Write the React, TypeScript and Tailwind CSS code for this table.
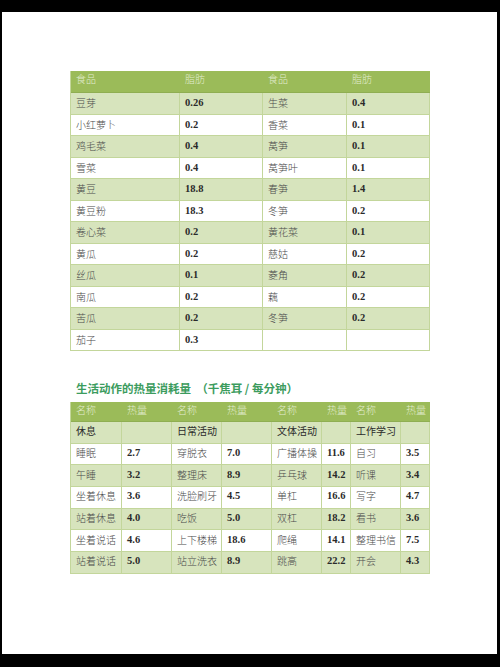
import React from 'react';

const cn = '"Noto Sans CJK SC", "Noto Sans", sans-serif';
const num = '"Liberation Serif", "DejaVu Serif", serif';

const foods: string[][] = [
    ['豆芽', '0.26', '生菜', '0.4'],
    ['小红萝卜', '0.2', '香菜', '0.1'],
    ['鸡毛菜', '0.4', '莴笋', '0.1'],
    ['雪菜', '0.4', '莴笋叶', '0.1'],
    ['黄豆', '18.8', '春笋', '1.4'],
    ['黄豆粉', '18.3', '冬笋', '0.2'],
    ['卷心菜', '0.2', '黄花菜', '0.1'],
    ['黄瓜', '0.2', '慈姑', '0.2'],
    ['丝瓜', '0.1', '菱角', '0.2'],
    ['南瓜', '0.2', '藕', '0.2'],
    ['苦瓜', '0.2', '冬笋', '0.2'],
    ['茄子', '0.3', '', ''],
];

const activities: string[][] = [
    ['休息', '', '日常活动', '', '文体活动', '', '工作学习', ''],
    ['睡眠', '2.7', '穿脱衣', '7.0', '广播体操', '11.6', '自习', '3.5'],
    ['午睡', '3.2', '整理床', '8.9', '乒乓球', '14.2', '听课', '3.4'],
    ['坐着休息', '3.6', '洗脸刷牙', '4.5', '单杠', '16.6', '写字', '4.7'],
    ['站着休息', '4.0', '吃饭', '5.0', '双杠', '18.2', '看书', '3.6'],
    ['坐着说话', '4.6', '上下楼梯', '18.6', '爬绳', '14.1', '整理书信', '7.5'],
    ['站着说话', '5.0', '站立洗衣', '8.9', '跳高', '22.2', '开会', '4.3'],
];

const isNum = (s: string) => /^[0-9.]+$/.test(s);

const Cell: React.FC<{text: string; center?: boolean; strong?: boolean}> = ({text, center, strong}) => (
    <div
        className={`border-r border-b border-[#c3d69b] pl-[5px] flex leading-[14px] ${center ? 'items-center pb-[2px]' : 'items-start pt-[3px]'} overflow-hidden whitespace-nowrap`}
    >
        {isNum(text) ? (
            <span className="text-[10.5px] font-bold text-[#2a2a2a] leading-[14px]" style={{fontFamily: num}}>{text}</span>
        ) : (
            <span
                className={`text-[10px] leading-[14px] ${strong ? 'text-[#2a2a2a]' : 'text-[#4a4a4a] font-light'}`}
                style={{fontFamily: cn}}
            >
                {text}
            </span>
        )}
    </div>
);

const Head: React.FC<{text: string; h: string}> = ({text, h}) => (
    <div className={`${h} bg-[#9bbb59] pl-[5px] flex items-start pt-[1px] border-b border-[#8fae52] leading-[14px] overflow-hidden whitespace-nowrap`}>
        <span className="text-[10px] leading-[14px] text-[#e2ecd0] font-light" style={{fontFamily: cn}}>{text}</span>
    </div>
);

export default function App() {
    return (
        <div className="w-[500px] h-[667px] bg-black pt-[12px] pl-[2px]">
            <div className="w-[495px] h-[642px] bg-white pl-[68px] pt-[59px]">
                {/* fat table */}
                <div className="w-[359px] grid grid-cols-[109px_83px_84px_83px] border-l border-[#c3d69b]">
                    {['食品', '脂肪', '食品', '脂肪'].map((h, i) => (
                        <Head key={i} text={h} h="h-[22px]"/>
                    ))}
                    {foods.map((row, r) =>
                        row.map((c, i) => (
                            <div key={`${r}-${i}`} className={`h-[21.5px] grid ${r % 2 === 0 ? 'bg-[#d7e4bd]' : 'bg-white'}`}>
                                <Cell text={c}/>
                            </div>
                        ))
                    )}
                </div>

                <h2
                    className="mt-[30px] pl-[6px] text-[11.5px] leading-[14px] font-bold text-[#3c9c5e] whitespace-pre"
                    style={{fontFamily: cn}}
                >
                    生活动作的热量消耗量  （千焦耳 / 每分钟）
                </h2>

                {/* energy table */}
                <div className="mt-[7px] w-[359px] grid grid-cols-[51px_50px_50px_50px_50px_29px_50px_29px] border-l border-[#c3d69b]">
                    {['名称', '热量', '名称', '热量', '名称', '热量', '名称', '热量'].map((h, i) => (
                        <Head key={i} text={h} h="h-[20px]"/>
                    ))}
                    {activities.map((row, r) =>
                        row.map((c, i) => (
                            <div key={`${r}-${i}`} className={`h-[21.7px] grid ${r % 2 === 0 ? 'bg-[#d7e4bd]' : 'bg-white'}`}>
                                <Cell text={c} center strong={r === 0}/>
                            </div>
                        ))
                    )}
                </div>
            </div>
        </div>
    );
}
